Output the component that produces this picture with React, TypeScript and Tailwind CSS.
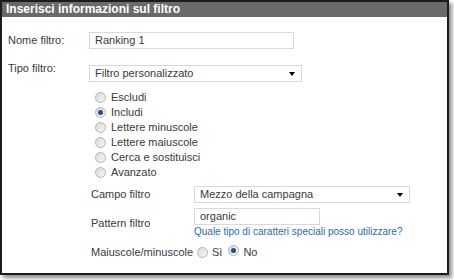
const Radio = ({ checked = false }: { checked?: boolean }) => (
  <span className="relative inline-block w-[11px] h-[11px] rounded-full border border-[#b3b3b3] bg-gradient-to-br from-[#d9d9d9] to-[#f8f8f8] shrink-0">
    {checked && (
      <span className="absolute left-[2px] top-[2px] w-[5px] h-[5px] rounded-full bg-[#1d4f86]" />
    )}
  </span>
);

const Select = ({ value, width }: { value: string; width: string }) => (
  <div
    className={`${width} h-[17px] border border-[#d9d9d9] bg-white flex items-center justify-between pl-[5px] pr-[6px]`}
  >
    <span>{value}</span>
    <span className="w-0 h-0 border-l-[3px] border-r-[3px] border-t-[4px] border-l-transparent border-r-transparent border-t-black" />
  </div>
);

const options = [
  "Escludi",
  "Includi",
  "Lettere minuscole",
  "Lettere maiuscole",
  "Cerca e sostituisci",
  "Avanzato",
];

export default function App() {
  return (
    <div className="w-[454px] h-[280px] bg-white font-['Liberation_Sans',Arial,sans-serif] text-[11px] text-[#3a3a3a]">
      <div className="w-[449px] h-[275px] border-2 border-[#1c1c1c] shadow-[3px_3px_4px_rgba(0,0,0,0.45)] flex flex-col">
        {/* Header */}
        <div className="h-[15px] bg-[#6a6a6a] text-white font-bold text-[12px] leading-[15px] pl-[4px]">
          Inserisci informazioni sul filtro
        </div>

        <div className="pl-[6px] pt-[15px]">
          {/* Nome filtro */}
          <div className="flex items-center h-[17px]">
            <span className="w-[81px]">Nome filtro:</span>
            <div className="w-[205px] h-[17px] border border-[#d9d9d9] bg-white pl-[5px] leading-[15px]">
              Ranking 1
            </div>
          </div>

          {/* Tipo filtro */}
          <div className="flex items-start mt-[16px]">
            <span className="w-[81px] leading-[12px] -mt-[3px]">Tipo filtro:</span>
            <Select value="Filtro personalizzato" width="w-[213px]" />
          </div>

          {/* Options */}
          <div className="pl-[87px] pt-[8px] flex flex-col">
            {options.map((o, i) => (
              <label key={o} className="flex items-center gap-[5px] h-[15px]">
                <Radio checked={i === 1} />
                <span>{o}</span>
              </label>
            ))}
          </div>

          {/* Sub fields */}
          <div className="pl-[83px] pt-[6px] grid grid-cols-[103px_auto] gap-y-[5px] items-start">
            <span className="leading-[16px]">Campo filtro</span>
            <Select value="Mezzo della campagna" width="w-[216px]" />

            <span className="leading-[16px] mt-[7px]">Pattern filtro</span>
            <div className="flex flex-col">
              <div className="w-[126px] h-[17px] border border-[#d9d9d9] bg-white pl-[5px] leading-[15px]">
                organic
              </div>
              <a className="text-[#2a6ba8] text-[10px] leading-[14px]">
                Quale tipo di caratteri speciali posso utilizzare?
              </a>
            </div>

            <span className="leading-[16px]">Maiuscole/minuscole</span>
            <div className="flex items-center h-[16px] pl-[3px]">
              <Radio />
              <span className="ml-[4px]">Sì</span>
              <span className="ml-[6px]">
                <Radio checked />
              </span>
              <span className="ml-[4px]">No</span>
            </div>
          </div>
        </div>
      </div>
    </div>
  );
}
